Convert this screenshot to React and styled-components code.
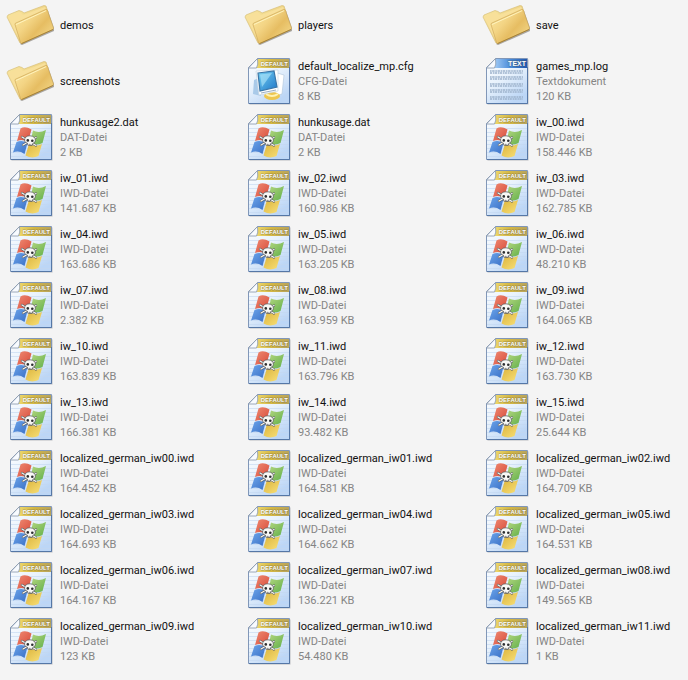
import React from 'react';
import styled, { createGlobalStyle } from 'styled-components';

const folders = ['demos', 'players', 'save', 'screenshots'];

const files = [
  ['default_localize_mp.cfg', 'CFG-Datei', '8 KB', 'config'],
  ['games_mp.log', 'Textdokument', '120 KB', 'text'],
  ['hunkusage2.dat', 'DAT-Datei', '2 KB'],
  ['hunkusage.dat', 'DAT-Datei', '2 KB'],
  ['iw_00.iwd', 'IWD-Datei', '158.446 KB'],
  ['iw_01.iwd', 'IWD-Datei', '141.687 KB'],
  ['iw_02.iwd', 'IWD-Datei', '160.986 KB'],
  ['iw_03.iwd', 'IWD-Datei', '162.785 KB'],
  ['iw_04.iwd', 'IWD-Datei', '163.686 KB'],
  ['iw_05.iwd', 'IWD-Datei', '163.205 KB'],
  ['iw_06.iwd', 'IWD-Datei', '48.210 KB'],
  ['iw_07.iwd', 'IWD-Datei', '2.382 KB'],
  ['iw_08.iwd', 'IWD-Datei', '163.959 KB'],
  ['iw_09.iwd', 'IWD-Datei', '164.065 KB'],
  ['iw_10.iwd', 'IWD-Datei', '163.839 KB'],
  ['iw_11.iwd', 'IWD-Datei', '163.796 KB'],
  ['iw_12.iwd', 'IWD-Datei', '163.730 KB'],
  ['iw_13.iwd', 'IWD-Datei', '166.381 KB'],
  ['iw_14.iwd', 'IWD-Datei', '93.482 KB'],
  ['iw_15.iwd', 'IWD-Datei', '25.644 KB'],
  ['localized_german_iw00.iwd', 'IWD-Datei', '164.452 KB'],
  ['localized_german_iw01.iwd', 'IWD-Datei', '164.581 KB'],
  ['localized_german_iw02.iwd', 'IWD-Datei', '164.709 KB'],
  ['localized_german_iw03.iwd', 'IWD-Datei', '164.693 KB'],
  ['localized_german_iw04.iwd', 'IWD-Datei', '164.662 KB'],
  ['localized_german_iw05.iwd', 'IWD-Datei', '164.531 KB'],
  ['localized_german_iw06.iwd', 'IWD-Datei', '164.167 KB'],
  ['localized_german_iw07.iwd', 'IWD-Datei', '136.221 KB'],
  ['localized_german_iw08.iwd', 'IWD-Datei', '149.565 KB'],
  ['localized_german_iw09.iwd', 'IWD-Datei', '123 KB'],
  ['localized_german_iw10.iwd', 'IWD-Datei', '54.480 KB'],
  ['localized_german_iw11.iwd', 'IWD-Datei', '1 KB'],
];

const textLines = [16, 22, 29, 35, 42];

// Gradients shared by all the icons, defined once
const IconDefs = () => (
  <DefsStyle aria-hidden="true">
    <defs>
      <linearGradient id="front" x1="0" y1="0.1" x2="1" y2="0.9">
        <stop offset="0" stopColor="#fbe7a0" />
        <stop offset="0.35" stopColor="#f3d484" />
        <stop offset="0.6" stopColor="#e6bd62" />
        <stop offset="1" stopColor="#f5dc90" />
      </linearGradient>
      <linearGradient id="back" x1="0" y1="0" x2="1" y2="1">
        <stop offset="0" stopColor="#faeaa5" />
        <stop offset="1" stopColor="#e3bf67" />
      </linearGradient>
      <linearGradient id="paper" x1="0" y1="0" x2="0.6" y2="1">
        <stop offset="0" stopColor="#fdfeff" />
        <stop offset="0.5" stopColor="#e8f2fc" />
        <stop offset="1" stopColor="#bcd6f6" />
      </linearGradient>
      <linearGradient id="gold" x1="0" y1="0" x2="1" y2="0">
        <stop offset="0" stopColor="#f1dc70" />
        <stop offset="0.5" stopColor="#d3b643" />
        <stop offset="1" stopColor="#b9a45c" />
      </linearGradient>
      <linearGradient id="blue" x1="0" y1="0" x2="1" y2="0">
        <stop offset="0" stopColor="#a9d0f7" />
        <stop offset="0.5" stopColor="#4a8cda" />
        <stop offset="1" stopColor="#2258ae" />
      </linearGradient>
      <linearGradient id="screen" x1="0" y1="0" x2="1" y2="1">
        <stop offset="0" stopColor="#76d1f3" />
        <stop offset="1" stopColor="#1f77c8" />
      </linearGradient>
      <linearGradient id="red" x1="0" y1="0" x2="1" y2="1">
        <stop offset="0" stopColor="#ee8a72" />
        <stop offset="1" stopColor="#d84a3a" />
      </linearGradient>
      <linearGradient id="green" x1="0" y1="0" x2="1" y2="1">
        <stop offset="0" stopColor="#b4d680" />
        <stop offset="1" stopColor="#62b04a" />
      </linearGradient>
      <linearGradient id="azure" x1="0" y1="0" x2="1" y2="1">
        <stop offset="0" stopColor="#6ba4ea" />
        <stop offset="1" stopColor="#3a70c6" />
      </linearGradient>
      <linearGradient id="yellow" x1="0" y1="0" x2="1" y2="1">
        <stop offset="0" stopColor="#dcb43c" />
        <stop offset="1" stopColor="#f8e078" />
      </linearGradient>
    </defs>
  </DefsStyle>
);

const FolderIcon = () => (
  <IconStyle viewBox="0 0 48 50" aria-hidden="true">
    <path d="M16 45 L48 31 L48 28 L42 11 L14 44Z" fill="#77716a" opacity="0.6" />
    <path d="M1 17 L2 15 L13 10.5 L16 11.5 L18 13 L38 5.5 L40 6 L42 12 L16 43 L14 43Z" fill="url(#back)" stroke="#d9bf78" strokeWidth="0.7" />
    <path d="M2 17 L13 12 L15 13 L17 15 L39 7 L40 10 L10 23 L14 41Z" fill="#f8e09a" />
    <path d="M9 24.5 Q8.5 23.5 10 23 L39.5 9.5 Q41 9 41.5 10.5 L47.5 28 Q47.8 29 46.5 29.7 L16.5 43.3 Q15 44 14.5 42.5Z" fill="url(#front)" stroke="#c9a253" strokeWidth="0.6" />
    <path d="M10 24.5 L40 10.7" stroke="#fff3bd" strokeWidth="1" fill="none" />
    <path d="M15.5 43.6 L47 29.5" stroke="#9b762a" strokeWidth="0.8" fill="none" />
  </IconStyle>
);

const Page = ({ label, bar, children }) => (
  <IconStyle viewBox="0 0 48 50" aria-hidden="true">
    <path d="M13 3.5 H46.5 V48.5 H5.5 V11Z" fill="#767b83" opacity="0.45" />
    <path d="M13.5 2.5 H45.5 V47.5 H4.5 V11.5Z" fill="url(#paper)" />
    <path d="M13 3 H45 V12 H11Z" fill={`url(#${bar})`} />
    <path d="M13.5 2.5 H45.5 V47.5 H4.5 V11.5Z" fill="none" stroke="#8197b8" />
    <path d="M5 47.5 H45.5 V11" fill="none" stroke="#5577a6" />
    <path d="M4.5 12 L13.5 2.5 Q14.5 9 12.5 12Z" fill="#f8fbff" stroke="#8795a8" strokeWidth="0.8" />
    <Tab x="44" y="10" $small={label.length > 4}>{label}</Tab>
    {children}
  </IconStyle>
);

const ConfigIcon = () => (
  <Page label="DEFAULT" bar="gold">
    <path d="M9 38 L10 24 L15 22 L17 40Z" fill="#a9cae9" />
    <path d="M33 17 L40 19 L38 38 L27 41Z" fill="#fff" stroke="#aec4da" strokeWidth="0.6" />
    <ellipse cx="28" cy="40" rx="8" ry="4" fill="#edc64f" />
    <path d="M22 38 Q28 42 34 38" fill="none" stroke="#fff2b2" strokeWidth="2" />
    <path d="M12 15 L34 14 L34 35 L15 39Z" fill="#fff" stroke="#c9d7e4" strokeWidth="0.7" />
    <path d="M14 17 L30 15 L33 31 L16 35Z" fill="url(#screen)" stroke="#3a76a8" strokeWidth="1.2" />
    <path d="M16 18.5 L28 17 L18 31Z" fill="#b4e7fa" opacity="0.6" />
    <path d="M17 37 L32 34" stroke="#9dafc1" fill="none" />
  </Page>
);

const TextIcon = () => (
  <Page label="TEXT" bar="blue">
    {textLines.map((y) => (
      <g key={y} stroke="#9db3cc" strokeWidth="1.6" fill="none">
        <path d={`M8 ${y - 1} H41`} strokeDasharray="1.6 0.6 2.4 0.7" />
        <path d={`M8 ${y + 1} H41`} strokeDasharray="2.2 0.8 1.4 0.5" />
      </g>
    ))}
  </Page>
);

const DefaultIcon = () => (
  <Page label="DEFAULT" bar="gold">
    <path d="M5 16.5 H45 M5 20.5 H45 M5 24.5 H45 M5 28.5 H45 M5 32.5 H45 M5 36.5 H45 M5 40.5 H45 M5 44.5 H45" stroke="#c2d7f0" strokeWidth="0.6" />
    <path d="M14.5 16.5 Q19 13.5 25.5 17.5 L22 30 Q16.5 26.5 11 29Z" fill="url(#red)" />
    <path d="M27 18.5 Q33 21.5 40 18 L36.5 31 Q30 34 24 31Z" fill="url(#green)" />
    <path d="M10.5 30 Q16 27.5 21.5 31 L18.5 42 Q13 38 7 40.5Z" fill="url(#azure)" />
    <path d="M23 32 Q29 35 36 32 L32.5 44 Q26 47 19.5 43.5Z" fill="url(#yellow)" />
    <path d="M16 25 L30 33.5 M30 25.5 L17 33" stroke="#55585a" strokeWidth="2.2" strokeLinecap="round" />
    <path d="M16 25 L30 33.5 M30 25.5 L17 33" stroke="#f4f5f3" strokeWidth="1.4" strokeLinecap="round" />
    <path d="M18.5 28 Q19 23.8 24 23.8 Q29.6 24.2 29.4 28.8 Q29 31 26.8 31.3 L26.2 33.6 L21.8 33.2 L21.4 31.2 Q18.2 30.8 18.5 28Z" fill="#f8f8f5" stroke="#505254" strokeWidth="0.7" />
    <circle cx="21.8" cy="28.4" r="1.3" fill="#2c2e30" />
    <circle cx="26.3" cy="28.7" r="1.3" fill="#2c2e30" />
    <path d="M23.4 31.8 V33.2 M24.9 31.9 V33.3" stroke="#2c2e30" strokeWidth="0.5" />
  </Page>
);

const icons = {
  config: ConfigIcon,
  text: TextIcon,
  default: DefaultIcon,
};

const FileItem = ({ name, type, size, kind = 'default' }) => {
  const Icon = icons[kind];
  return (
    <Item>
      <Icon />
      <Details>
        <Line $main>{name}</Line>
        <Line>{type}</Line>
        <Line>{size}</Line>
      </Details>
    </Item>
  );
};

export const App = () => {
  return (
    <>
      <GlobalStyle />
      <IconDefs />
      <FileGrid>
        {folders.map((name) => (
          <Item key={name}>
            <FolderIcon />
            <Details>
              <Line $main>{name}</Line>
            </Details>
          </Item>
        ))}
        {files.map(([name, type, size, kind]) => (
          <FileItem key={name} name={name} type={type} size={size} kind={kind} />
        ))}
      </FileGrid>
    </>
  );
};

const GlobalStyle = createGlobalStyle`
  body {
    margin: 0;
    background: #f4f4f4;
    font-family: Roboto, 'Open Sans', sans-serif;
    font-size: 11px;
  }
`;

const FileGrid = styled.ul`
  display: grid;
  grid-template-columns: repeat(3, minmax(0, 1fr));
  grid-auto-rows: minmax(50px, auto);
  gap: 6px 32px;
  margin: 0;
  padding: 0 0 14px 6px;
  list-style: none;
`;

const Item = styled.li`
  display: flex;
  align-items: center;
  gap: 6px;
`;

const Details = styled.div`
  min-width: 0;
  white-space: nowrap;
`;

const Line = styled.div`
  line-height: 15px;
  color: ${({ $main }) => ($main ? '#111' : '#858585')};
`;

const IconStyle = styled.svg`
  flex: none;
  width: 48px;
  height: 50px;
`;

const DefsStyle = styled.svg`
  display: block;
  width: 0;
  height: 0;
`;

const Tab = styled.text`
  font-family: 'Liberation Sans', sans-serif;
  font-size: ${({ $small }) => ($small ? '6px' : '7px')};
  font-weight: 700;
  text-anchor: end;
  fill: #fff;
  stroke: rgba(80, 80, 60, 0.4);
  stroke-width: 1px;
  paint-order: stroke;
`;

export default App;
